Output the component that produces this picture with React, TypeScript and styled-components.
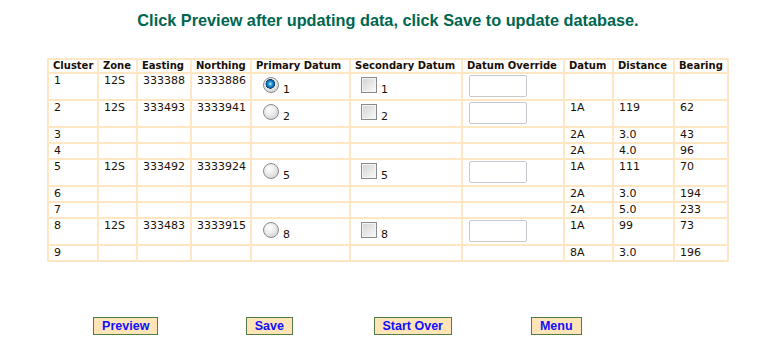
import React from "react";
import styled, { createGlobalStyle } from "styled-components";

const GlobalStyle = createGlobalStyle`
  body {
    margin: 8px;
    background: #ffffff;
    font-family: "DejaVu Sans", Verdana, sans-serif;
  }
`;

const Page = styled.div`
  display: flex;
  flex-direction: column;
`;

const Title = styled.h1`
  margin: 0;
  padding-top: 3px;
  height: 47px;
  text-align: center;
  font-family: "Liberation Sans", Arial, sans-serif;
  font-weight: bold;
  font-size: 16.3px;
  line-height: 18px;
  color: #006650;
`;

const Table = styled.table`
  margin: 0 auto;
  border-collapse: collapse;
  table-layout: fixed;
  width: 680px;
  border: 2px solid #ffe7c4;
`;

const Th = styled.th`
  border: 2px solid #ffe7c4;
  padding: 0 3px 0 4px;
  text-align: left;
  font-size: 10px;
  font-weight: bold;
  line-height: 12px;
  color: #1a1008;
  white-space: nowrap;
`;

const Td = styled.td`
  border: 2px solid #ffe7c4;
  padding: 1px 3px 1px 5px;
  vertical-align: top;
  font-size: 11px;
  line-height: 12px;
  color: #1a1008;
  white-space: nowrap;
  height: 12px;
`;

const Radio = styled.input.attrs({ type: "radio" })`
  appearance: none;
  -webkit-appearance: none;
  width: 16px;
  height: 16px;
  margin: 2px 4px 0 6px;
  vertical-align: baseline;
  border-radius: 50%;
  box-sizing: border-box;
  border: 1px solid #8c8c8c;
  background: radial-gradient(circle at 40% 35%, #ffffff 0, #ececec 40%, #c8c8c8 100%);
  &:checked {
    background:
      radial-gradient(circle at 45% 42%, #b8ecff 0, #2d9ad8 2px, #0b5c98 4px, #073e6a 4.6px, transparent 5px),
      radial-gradient(circle at 40% 35%, #ffffff 0, #ececec 40%, #c8c8c8 100%);
  }
`;

const Check = styled.input.attrs({ type: "checkbox" })`
  appearance: none;
  -webkit-appearance: none;
  width: 16px;
  height: 16px;
  margin: 2px 4px 0 5px;
  vertical-align: baseline;
  box-sizing: border-box;
  border: 1px solid #8a8a8a;
  box-shadow: inset 0 0 0 1px #f4f4f4;
  background: linear-gradient(135deg, #d2d2d2 0%, #e6e6e6 50%, #fbfbfb 100%);
`;

const TextInput = styled.input.attrs({ type: "text" })`
  box-sizing: border-box;
  width: 58px;
  height: 22px;
  margin: 0 0 1px 1px;
  border: 1px solid #c6c9cf;
  border-radius: 2px;
  background: #fff;
  display: block;
`;

const ButtonBar = styled.div`
  margin-top: 55px;
  margin-left: 46px;
  display: grid;
  grid-template-columns: repeat(4, 143.5px);
  justify-items: center;
`;

const Button = styled.button`
  font-family: "Liberation Sans", Arial, sans-serif;
  font-weight: bold;
  font-size: 12.5px;
  line-height: 14px;
  color: #1010ff;
  background: #ffe4b8;
  border: 1px solid #4f7d44;
  padding: 1px 8px 1px 8px;
  height: 18px;
  cursor: pointer;
`;

type Row = {
  cluster: string;
  zone?: string;
  easting?: string;
  northing?: string;
  primary?: boolean;
  checked?: boolean;
  datum?: string;
  distance?: string;
  bearing?: string;
};

const rows: Row[] = [
  { cluster: "1", zone: "12S", easting: "333388", northing: "3333886", primary: true, checked: true },
  { cluster: "2", zone: "12S", easting: "333493", northing: "3333941", primary: true, datum: "1A", distance: "119", bearing: "62" },
  { cluster: "3", datum: "2A", distance: "3.0", bearing: "43" },
  { cluster: "4", datum: "2A", distance: "4.0", bearing: "96" },
  { cluster: "5", zone: "12S", easting: "333492", northing: "3333924", primary: true, datum: "1A", distance: "111", bearing: "70" },
  { cluster: "6", datum: "2A", distance: "3.0", bearing: "194" },
  { cluster: "7", datum: "2A", distance: "5.0", bearing: "233" },
  { cluster: "8", zone: "12S", easting: "333483", northing: "3333915", primary: true, datum: "1A", distance: "99", bearing: "73" },
  { cluster: "9", datum: "8A", distance: "3.0", bearing: "196" },
];

const cols = [50, 39, 54, 60, 99, 112, 102, 49, 61, 54];
const headers = [
  "Cluster",
  "Zone",
  "Easting",
  "Northing",
  "Primary Datum",
  "Secondary Datum",
  "Datum Override",
  "Datum",
  "Distance",
  "Bearing",
];

export default function App() {
  return (
    <Page>
      <GlobalStyle />
      <Title>Click Preview after updating data, click Save to update database.</Title>
      <Table>
        <colgroup>
          {cols.map((w, i) => (
            <col key={i} style={{ width: w }} />
          ))}
        </colgroup>
        <thead>
          <tr>
            {headers.map((h) => (
              <Th key={h}>{h}</Th>
            ))}
          </tr>
        </thead>
        <tbody>
          {rows.map((r) => (
            <tr key={r.cluster}>
              <Td>{r.cluster}</Td>
              <Td>{r.zone}</Td>
              <Td>{r.easting}</Td>
              <Td>{r.northing}</Td>
              <Td>
                {r.primary && (
                  <>
                    <Radio name="primary" defaultChecked={r.checked} />
                    {r.cluster}
                  </>
                )}
              </Td>
              <Td>
                {r.primary && (
                  <>
                    <Check />
                    {r.cluster}
                  </>
                )}
              </Td>
              <Td>{r.primary && <TextInput />}</Td>
              <Td>{r.datum}</Td>
              <Td>{r.distance}</Td>
              <Td>{r.bearing}</Td>
            </tr>
          ))}
        </tbody>
      </Table>
      <ButtonBar>
        <Button>Preview</Button>
        <Button>Save</Button>
        <Button>Start Over</Button>
        <Button>Menu</Button>
      </ButtonBar>
    </Page>
  );
}
